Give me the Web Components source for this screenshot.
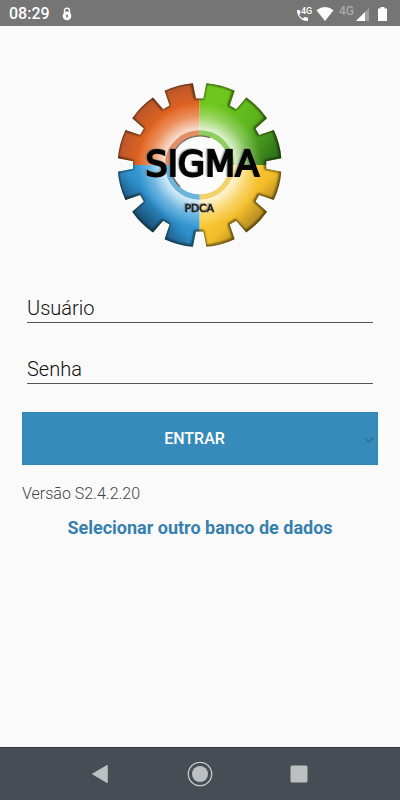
<!DOCTYPE html>
<html lang="pt-BR">
<head>
<meta charset="utf-8">
<meta name="viewport" content="width=device-width, initial-scale=1">
<title>SIGMA</title>
<style>
html, body { margin: 0; height: 100%; }
body { background: #fafafa; font-family: Roboto, "Liberation Sans", sans-serif; }
sigma-app { height: 100%; }
</style>
</head>
<body>
<sigma-app></sigma-app>
<script>
const define = (name, html, setup) => {
  const template = document.createElement('template');
  template.innerHTML = html;
  customElements.define(name, class extends HTMLElement {
    constructor() {
      super();
      this.attachShadow({ mode: 'open' }).append(template.content.cloneNode(true));
    }
    connectedCallback() { if (setup) setup(this, this.shadowRoot); }
  });
};

define('status-bar', `
<style>
:host { display: flex; align-items: center; height: 26px; padding: 2px 13px 0 9px; box-sizing: border-box; background: #757575; color: #fff; font-size: 16px; line-height: 24px; font-weight: 500; }
svg { display: block; }
.lock { margin-left: 12px; }
.right { display: flex; align-items: center; margin-left: auto; }
.wifi { margin-left: 4px; }
.net { font-size: 12px; line-height: 18px; font-weight: 500; color: #a9a9a9; margin: 0 2px 6px 5px; }
.bat { margin-left: 9px; }
</style>
<span>08:29</span>
<svg class="lock" width="10" height="14" viewBox="0 0 10 14"><path d="M2.500 6V3.600a2.500 2.500 0 0 1 5 0V6" fill="none" stroke="#fff" stroke-width="1.400"/><circle cx="5" cy="8.900" r="4.300" fill="#fff"/><path d="M5 7.500v3" stroke="#757575" stroke-width="1.600"/></svg>
<div class="right">
<svg width="16" height="16" viewBox="0 0 16 16"><path d="M1 4h2.800l.8 3.200-1.500 1.700a10 10 0 0 0 3.800 3.600l1.700-1.500 3.400.8v3C6 15.600.6 10 1 4z" fill="#fff"/><text x="5" y="8" font-family="Roboto,sans-serif" font-size="9" font-weight="500" fill="#fff">4G</text></svg>
<svg class="wifi" width="18" height="16" viewBox="0 0 18 16"><path d="M.5 4.200Q9-2.400 17.500 4.200L9 15z" fill="#fff"/></svg>
<span class="net">4G</span>
<svg width="13" height="13" viewBox="0 0 13 13"><path d="M13 0v13H0z" fill="#a0a0a0"/><path d="M9 4V13H0z" fill="#fff"/></svg>
<svg class="bat" width="9" height="14" viewBox="0 0 9 14"><path d="M2.500 0h4v1.500H9V14H0V1.500h2.500z" fill="#fff"/></svg>
</div>`);

define('sigma-logo', `
<style>
:host { display: block; width: 180px; height: 180px; }
svg { display: block; width: 100%; height: 100%; }
.word { filter: drop-shadow(-4px -2px 1px #6668); }
</style>
<svg viewBox="0 0 540 540" role="img" aria-label="SIGMA PDCA">
<defs>
<clipPath id="gear"><path class="outline"/></clipPath>
<radialGradient id="glow" gradientUnits="userSpaceOnUse" cx="269" cy="270" r="246">
<stop offset=".36" stop-color="#fff" stop-opacity=".9"/><stop offset=".46" stop-color="#fff" stop-opacity=".7"/><stop offset=".6" stop-color="#fff" stop-opacity=".28"/><stop offset=".76" stop-color="#fff" stop-opacity="0"/>
</radialGradient>
<radialGradient id="or" gradientUnits="userSpaceOnUse" cx="269" cy="270" r="250"><stop offset=".7" stop-color="#e3651f"/><stop offset="1" stop-color="#b8552c"/></radialGradient>
<linearGradient id="gr" gradientUnits="userSpaceOnUse" x1="310" y1="100" x2="505" y2="230"><stop offset="0" stop-color="#6fc61c"/><stop offset=".5" stop-color="#5cb51e"/><stop offset="1" stop-color="#2f7319"/></linearGradient>
<linearGradient id="bl" gradientUnits="userSpaceOnUse" x1="200" y1="340" x2="85" y2="455"><stop offset="0" stop-color="#3da4df"/><stop offset=".45" stop-color="#2e8fcb"/><stop offset="1" stop-color="#123d5c"/></linearGradient>
<linearGradient id="ye" gradientUnits="userSpaceOnUse" x1="330" y1="340" x2="460" y2="460"><stop offset="0" stop-color="#ffcd36"/><stop offset=".5" stop-color="#f2bd2a"/><stop offset="1" stop-color="#96701a"/></linearGradient>
<filter id="soft" x="-10%" y="-10%" width="120%" height="120%"><feGaussianBlur stdDeviation="3"/></filter>
<filter id="fine"><feGaussianBlur stdDeviation="1.500"/></filter>
</defs>
<g clip-path="url(#gear)">
<path d="M20 20H269V270H20z" fill="url(#or)"/><path d="M269 20H520V270H269z" fill="url(#gr)"/>
<path d="M20 270H269V520H20z" fill="url(#bl)"/><path d="M269 270H520V520H269z" fill="url(#ye)"/>
<circle cx="269" cy="270" r="246" fill="url(#glow)"/>
<path class="outline" fill="none" stroke="#101408" stroke-opacity=".75" stroke-width="7" filter="url(#soft)" transform="translate(-2 -1)"/>
</g>
<g fill="none" stroke-width="16" stroke-opacity=".85">
<path d="M173 270A96 96 0 0 1 269 174" stroke="#dc7f52"/><path d="M269 174A96 96 0 0 1 365 270" stroke="#7fc64a"/>
<path d="M365 270A96 96 0 0 1 269 366" stroke="#f0cb58"/><path d="M269 366A96 96 0 0 1 173 270" stroke="#58a8d6"/>
</g>
<circle cx="269" cy="270" r="88" fill="#fcfcfc"/>
<path d="M210 335A88 88 0 0 1 300 188" fill="none" stroke="#4b3c27" stroke-opacity=".75" stroke-width="4" filter="url(#fine)"/>
<g class="word" font-family="'DejaVu Sans',sans-serif" text-anchor="middle">
<text x="277" y="302" font-size="105" fill="#050505" stroke="#050505" stroke-width="6">SIGMA</text>
<text x="268" y="411" font-size="32" fill="#222" stroke="#222" stroke-width="2">PDCA</text>
</g>
</svg>`, (host, root) => {
  // Twelve notches, 30 degrees apart, cut into a disc.
  const point = (r, deg) => {
    const t = deg * Math.PI / 180;
    return (269 + r * Math.sin(t)).toFixed(1) + ' ' + (270 - r * Math.cos(t)).toFixed(1);
  };
  let d = '';
  for (let a = 0; a < 360; a += 30) {
    d += (a ? 'L' : 'M') + point(200, a - 3.2) + 'L' + point(200, a + 3.2)
      + 'L' + point(246, a + 4.7) + 'A246 246 0 0 1 ' + point(246, a + 25.3);
  }
  root.querySelectorAll('.outline').forEach(p => p.setAttribute('d', d + 'Z'));
});

define('text-field', `
<style>
:host { display: block; }
input { display: block; box-sizing: border-box; width: 100%; height: 32px; margin: 0; padding: 2px 0 0; border: 0; border-bottom: 1px solid #555; border-radius: 0; outline: 0; background: none; font-family: inherit; font-size: 20px; font-weight: 300; color: #111; }
input::placeholder { color: #111; opacity: 1; }
</style>
<input>`, (host, root) => {
  const input = root.querySelector('input');
  input.type = host.getAttribute('type') || 'text';
  input.placeholder = host.getAttribute('label');
  input.setAttribute('aria-label', host.getAttribute('label'));
});

define('enter-button', `
<style>
:host { display: block; }
button { display: grid; grid-template-columns: 12px 1fr 12px; align-items: center; width: 100%; height: 53px; margin: 0; padding: 0; border: 1px solid #2f85b3; border-radius: 0; background: #368bba; color: #fff; font-family: inherit; font-size: 16px; font-weight: 500; text-align: center; }
span { grid-column: 2; padding-right: 11px; }
svg { display: block; }
</style>
<button type="submit"><span><slot></slot></span><svg width="10" height="10" viewBox="0 0 10 10"><path d="M1 5l3 3 5-5" fill="none" stroke="#286c94" stroke-width="1.300"/></svg></button>`);

define('nav-bar', `
<style>
:host { display: flex; justify-content: space-around; align-items: center; box-sizing: border-box; height: 53px; padding: 0 13%; border-top: 1px solid #30363c; background: #464d54; }
button { display: grid; place-items: center; width: 48px; height: 48px; margin: 0; padding: 0; border: 0; background: none; }
svg { display: block; }
</style>
<button aria-label="Voltar"><svg width="26" height="26" viewBox="0 0 26 26"><path d="M4.500 12.400L18.500 4.200q1.300-.7 1.300.7v16.200q0 1.400-1.300.7L4.500 13.600q-1-.6 0-1.200z" fill="#bcc0c1"/></svg></button>
<button aria-label="Início"><svg width="26" height="26" viewBox="0 0 26 26"><circle cx="13" cy="13" r="11.700" fill="none" stroke="#c3c7c8" stroke-width="1.300"/><circle cx="13" cy="13" r="8" fill="#bcc0c1"/></svg></button>
<button aria-label="Recentes"><svg width="26" height="26" viewBox="0 0 26 26"><rect x="4.500" y="4.500" width="17" height="17" rx="1.500" fill="#bcc0c1"/></svg></button>`);

define('sigma-app', `
<style>
:host { display: flex; flex-direction: column; }
main { flex: 1; display: flex; flex-direction: column; padding: 49px 22px 20px; }
sigma-logo { align-self: center; }
form { display: flex; flex-direction: column; margin-top: 36px; }
text-field { margin: 0 5px 29px; }
text-field + enter-button { margin-top: -1px; }
.version { margin: 19px 0 0; font-size: 16px; line-height: 20px; font-weight: 300; color: #444; }
a { align-self: center; margin-top: 12px; font-size: 18px; line-height: 24px; font-weight: 700; color: #3580ae; text-decoration: none; }
</style>
<status-bar></status-bar>
<main>
<sigma-logo></sigma-logo>
<form>
<text-field label="Usuário"></text-field>
<text-field label="Senha" type="password"></text-field>
<enter-button>ENTRAR</enter-button>
</form>
<p class="version">Versão S2.4.2.20</p>
<a href="#">Selecionar outro banco de dados</a>
</main>
<nav-bar></nav-bar>`);
</script>
</body>
</html>
